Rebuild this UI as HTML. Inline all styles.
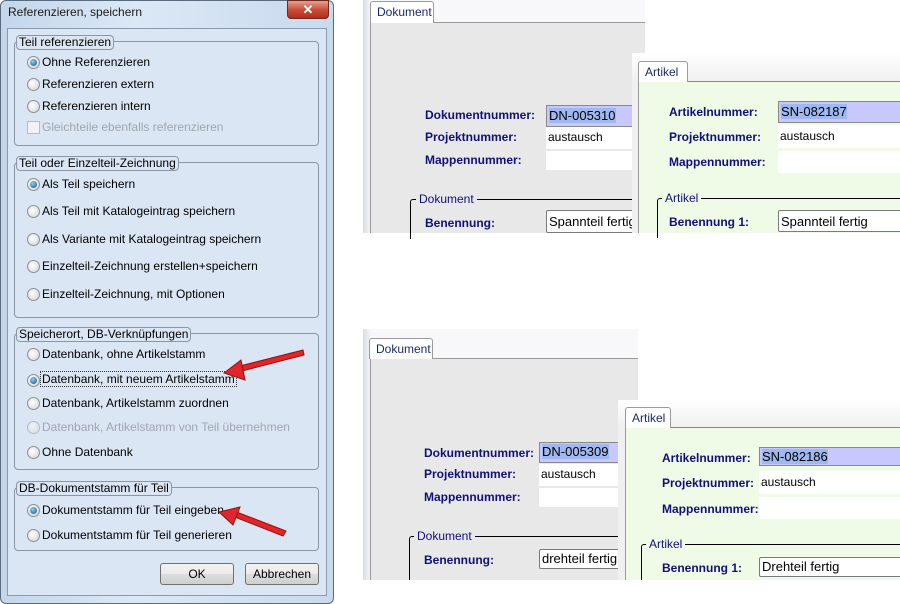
<!DOCTYPE html>
<html><head><meta charset="utf-8"><style>
*{margin:0;padding:0;box-sizing:border-box}
body{width:900px;height:604px;background:#fff;position:relative;overflow:hidden;font-family:"Liberation Sans",sans-serif;font-size:12px;color:#000}
.a{position:absolute;white-space:nowrap}
.grp{position:absolute;border:1px solid #8a95a5;border-radius:4px}
.leg{position:absolute;border:1px solid #8a95a5;border-radius:4px;background:#dbe6f4;padding:0 2px;line-height:13px;font-size:12px}
.rb{position:absolute;width:13px;height:13px;border-radius:50%;border:1px solid #8e8f8f;background:radial-gradient(circle at 40% 40%,#fff,#d0d0d0)}
.rb.on::after{content:"";position:absolute;left:2px;top:2px;width:7px;height:7px;border-radius:50%;background:radial-gradient(circle at 40% 35%,#8fd0f5,#0d4f8a)}
.dis{color:#a0a6ae}
.btn{position:absolute;border:1px solid #707070;border-radius:3px;background:linear-gradient(#f2f2f2,#ebebeb 50%,#dddddd 51%,#cfcfcf);text-align:center;line-height:20px}
.lab{position:absolute;font-weight:bold;color:#10107a;font-size:12px;white-space:nowrap}
.inp{position:absolute;background:#fff;overflow:hidden}
.inp span{position:absolute;left:2px;font-size:13px;white-space:nowrap}
.sel{background:#c8c8ff;border:1px solid #888}
.sel span{background:#a0b8f0}
.bx{border:1px solid #7a7a7a;border-radius:2px}
.tab{position:absolute;border:1px solid #9a9a9a;border-bottom:none;border-radius:3px 3px 0 0;padding:3px 0 0 6px;color:#1a2a70;font-size:12px}
</style></head><body>

<div class="a" style="left:0;top:0;width:334px;height:604px;border:1px solid #5a6b80;border-radius:6px;background:linear-gradient(90deg,#c3d6ea,#dbe8f6 40%,#c9daee)"></div>
<div class="a" style="left:8px;top:5px;font-size:12px;color:#1a1a1a">Referenzieren, speichern</div>
<div class="a" style="left:287px;top:0;width:42px;height:19px;border:1px solid #6b2a22;border-radius:0 0 4px 4px;background:linear-gradient(#e8a08f,#c9503b 50%,#b52d18);color:#fff;font-weight:bold;text-align:center;line-height:17px;font-size:13px">✕</div>
<div class="a" style="left:7px;top:28px;width:320px;height:568px;background:#dbe6f4;border:1px solid #8a9bb0"></div>

<div class="grp" style="left:14px;top:41px;width:305px;height:105px"></div>
<div class="leg" style="left:16px;top:35px">Teil referenzieren</div>
<div class="rb on" style="left:27px;top:56px"></div><div class="a" style="left:42px;top:55px">Ohne Referenzieren</div>
<div class="rb" style="left:27px;top:78px"></div><div class="a" style="left:42px;top:77px">Referenzieren extern</div>
<div class="rb" style="left:27px;top:100px"></div><div class="a" style="left:42px;top:99px">Referenzieren intern</div>
<div class="a" style="left:27px;top:121px;width:13px;height:13px;border:1px solid #b8bcc2;background:#f2f2f2"></div><div class="a dis" style="left:42px;top:120px">Gleichteile ebenfalls referenzieren</div>

<div class="grp" style="left:14px;top:162px;width:305px;height:156px"></div>
<div class="leg" style="left:16px;top:156px">Teil oder Einzelteil-Zeichnung</div>
<div class="rb on" style="left:27px;top:178px"></div><div class="a" style="left:42px;top:177px">Als Teil speichern</div>
<div class="rb" style="left:27px;top:205px"></div><div class="a" style="left:42px;top:204px">Als Teil mit Katalogeintrag speichern</div>
<div class="rb" style="left:27px;top:233px"></div><div class="a" style="left:42px;top:232px">Als Variante mit Katalogeintrag speichern</div>
<div class="rb" style="left:27px;top:260px"></div><div class="a" style="left:42px;top:259px">Einzelteil-Zeichnung erstellen+speichern</div>
<div class="rb" style="left:27px;top:288px"></div><div class="a" style="left:42px;top:287px">Einzelteil-Zeichnung, mit Optionen</div>

<div class="grp" style="left:14px;top:333px;width:305px;height:137px"></div>
<div class="leg" style="left:16px;top:327px">Speicherort, DB-Verknüpfungen</div>
<div class="rb" style="left:27px;top:348px"></div><div class="a" style="left:42px;top:347px">Datenbank, ohne Artikelstamm</div>
<div class="rb on" style="left:27px;top:374px"></div><div class="a" style="left:41px;top:372px;outline:1px dotted #333;padding:0 1px">Datenbank, mit neuem Artikelstamm</div>
<div class="rb" style="left:27px;top:397px"></div><div class="a" style="left:42px;top:396px">Datenbank, Artikelstamm zuordnen</div>
<div class="rb" style="left:27px;top:421px;opacity:.5"></div><div class="a dis" style="left:42px;top:420px">Datenbank, Artikelstamm von Teil übernehmen</div>
<div class="rb" style="left:27px;top:446px"></div><div class="a" style="left:42px;top:445px">Ohne Datenbank</div>

<div class="grp" style="left:14px;top:487px;width:305px;height:64px"></div>
<div class="leg" style="left:16px;top:481px">DB-Dokumentstamm für Teil</div>
<div class="rb on" style="left:27px;top:504px"></div><div class="a" style="left:42px;top:503px">Dokumentstamm für Teil eingeben</div>
<div class="rb" style="left:27px;top:529px"></div><div class="a" style="left:42px;top:528px">Dokumentstamm für Teil generieren</div>

<div class="btn" style="left:160px;top:563px;width:74px;height:22px">OK</div>
<div class="btn" style="left:245px;top:563px;width:74px;height:22px">Abbrechen</div>

<svg class="a" style="left:0;top:0" width="334" height="604">
<g fill="#e0262a" stroke="#9a1010" stroke-width="1">
<polygon points="303,350 304,355 238,372 236,367"/>
<polygon points="224,373 241,360 245,380"/>
<polygon points="286,531 283,536 232,516 234,511"/>
<polygon points="219,512 240,507 233,525"/>
</g></svg>

<div class="a" style="left:363px;top:0;width:282px;height:233px;background:linear-gradient(90deg,#d8dce4,#eef0f4 6px,#f8f8fa 8px)"></div>
<div class="a" style="left:370px;top:22px;width:275px;height:211px;background:#e8e8e8;border-top:1px solid #999;border-left:1px solid #999"></div>
<div class="tab" style="left:370px;top:1px;width:64px;height:22px;background:#fff">Dokument</div>
<div class="lab" style="left:425px;top:108px">Dokumentnummer:</div>
<div class="lab" style="left:425px;top:130px">Projektnummer:</div>
<div class="lab" style="left:425px;top:153px">Mappennummer:</div>
<div class="inp sel" style="left:546px;top:105px;width:100px;height:22px"><span style="top:2px">DN-005310</span></div>
<div class="inp" style="left:546px;top:127px;width:100px;height:22px"><span style="top:3px;font-size:12px">austausch</span></div>
<div class="inp" style="left:546px;top:151px;width:100px;height:19px"></div>
<div class="a" style="left:410px;top:199px;width:240px;height:40px;border-left:1px solid #000;border-top:1px solid #000;border-radius:3px 0 0 0"></div>
<div class="a" style="left:416px;top:192px;background:#e8e8e8;padding:0 3px;color:#10107a">Dokument</div>
<div class="lab" style="left:425px;top:216px">Benennung:</div>
<div class="inp bx" style="left:546px;top:210px;width:100px;height:23px"><span style="top:3px">Spannteil fertig</span></div>

<div class="a" style="left:632px;top:53px;width:268px;height:180px;background:linear-gradient(#fff,#f0f0f0 28px)"></div>
<div class="a" style="left:638px;top:81px;width:262px;height:152px;background:#effbe6;border-top:1px solid #888;border-left:1px solid #999"></div>
<div class="tab" style="left:638px;top:61px;width:50px;height:21px;background:#fff">Artikel</div>
<div class="lab" style="left:669px;top:105px">Artikelnummer:</div>
<div class="lab" style="left:669px;top:130px">Projektnummer:</div>
<div class="lab" style="left:669px;top:155px">Mappennummer:</div>
<div class="inp sel" style="left:778px;top:101px;width:130px;height:22px"><span style="top:2px">SN-082187</span></div>
<div class="inp" style="left:778px;top:125px;width:130px;height:23px"><span style="top:4px;font-size:12px">austausch</span></div>
<div class="inp" style="left:778px;top:151px;width:130px;height:22px"></div>
<div class="a" style="left:657px;top:198px;width:250px;height:40px;border-left:1px solid #000;border-top:1px solid #000;border-radius:3px 0 0 0"></div>
<div class="a" style="left:662px;top:191px;background:#effbe6;padding:0 3px;color:#10107a">Artikel</div>
<div class="lab" style="left:669px;top:215px">Benennung 1:</div>
<div class="inp bx" style="left:778px;top:210px;width:130px;height:22px"><span style="top:3px">Spannteil fertig</span></div>

<div class="a" style="left:363px;top:329px;width:275px;height:251px;background:linear-gradient(90deg,#d8dce4,#eef0f4 6px,#f8f8fa 8px)"></div>
<div class="a" style="left:370px;top:358px;width:268px;height:222px;background:#e8e8e8;border-top:1px solid #999;border-left:1px solid #999"></div>
<div class="tab" style="left:369px;top:338px;width:64px;height:21px;background:#fff">Dokument</div>
<div class="lab" style="left:424px;top:446px">Dokumentnummer:</div>
<div class="lab" style="left:424px;top:467px">Projektnummer:</div>
<div class="lab" style="left:424px;top:490px">Mappennummer:</div>
<div class="inp sel" style="left:539px;top:442px;width:95px;height:21px"><span style="top:1px">DN-005309</span></div>
<div class="inp" style="left:539px;top:464px;width:95px;height:22px"><span style="top:3px;font-size:12px">austausch</span></div>
<div class="inp" style="left:539px;top:488px;width:95px;height:19px"></div>
<div class="a" style="left:409px;top:536px;width:230px;height:50px;border-left:1px solid #000;border-top:1px solid #000;border-radius:3px 0 0 0"></div>
<div class="a" style="left:414px;top:529px;background:#e8e8e8;padding:0 3px;color:#10107a">Dokument</div>
<div class="lab" style="left:424px;top:553px">Benennung:</div>
<div class="inp bx" style="left:539px;top:549px;width:95px;height:20px"><span style="top:1px">drehteil fertig</span></div>

<div class="a" style="left:618px;top:400px;width:282px;height:180px;background:linear-gradient(#fff,#f0f0f0 27px)"></div>
<div class="a" style="left:625px;top:427px;width:275px;height:153px;background:#effbe6;border-top:1px solid #888;border-left:1px solid #999"></div>
<div class="tab" style="left:625px;top:407px;width:46px;height:21px;background:#fff">Artikel</div>
<div class="lab" style="left:662px;top:451px">Artikelnummer:</div>
<div class="lab" style="left:662px;top:476px">Projektnummer:</div>
<div class="lab" style="left:662px;top:502px">Mappennummer:</div>
<div class="inp sel" style="left:759px;top:447px;width:150px;height:19px"><span style="top:1px">SN-082186</span></div>
<div class="inp" style="left:759px;top:471px;width:150px;height:23px"><span style="top:4px;font-size:12px">austausch</span></div>
<div class="inp" style="left:759px;top:497px;width:150px;height:22px"></div>
<div class="a" style="left:641px;top:544px;width:270px;height:40px;border-left:1px solid #000;border-top:1px solid #000;border-radius:3px 0 0 0"></div>
<div class="a" style="left:646px;top:537px;background:#effbe6;padding:0 3px;color:#10107a">Artikel</div>
<div class="lab" style="left:662px;top:561px">Benennung 1:</div>
<div class="inp bx" style="left:759px;top:557px;width:150px;height:20px"><span style="top:1px">Drehteil fertig</span></div>
<div class="a" style="left:363px;top:580px;width:537px;height:24px;background:#fff"></div>
</body></html>
